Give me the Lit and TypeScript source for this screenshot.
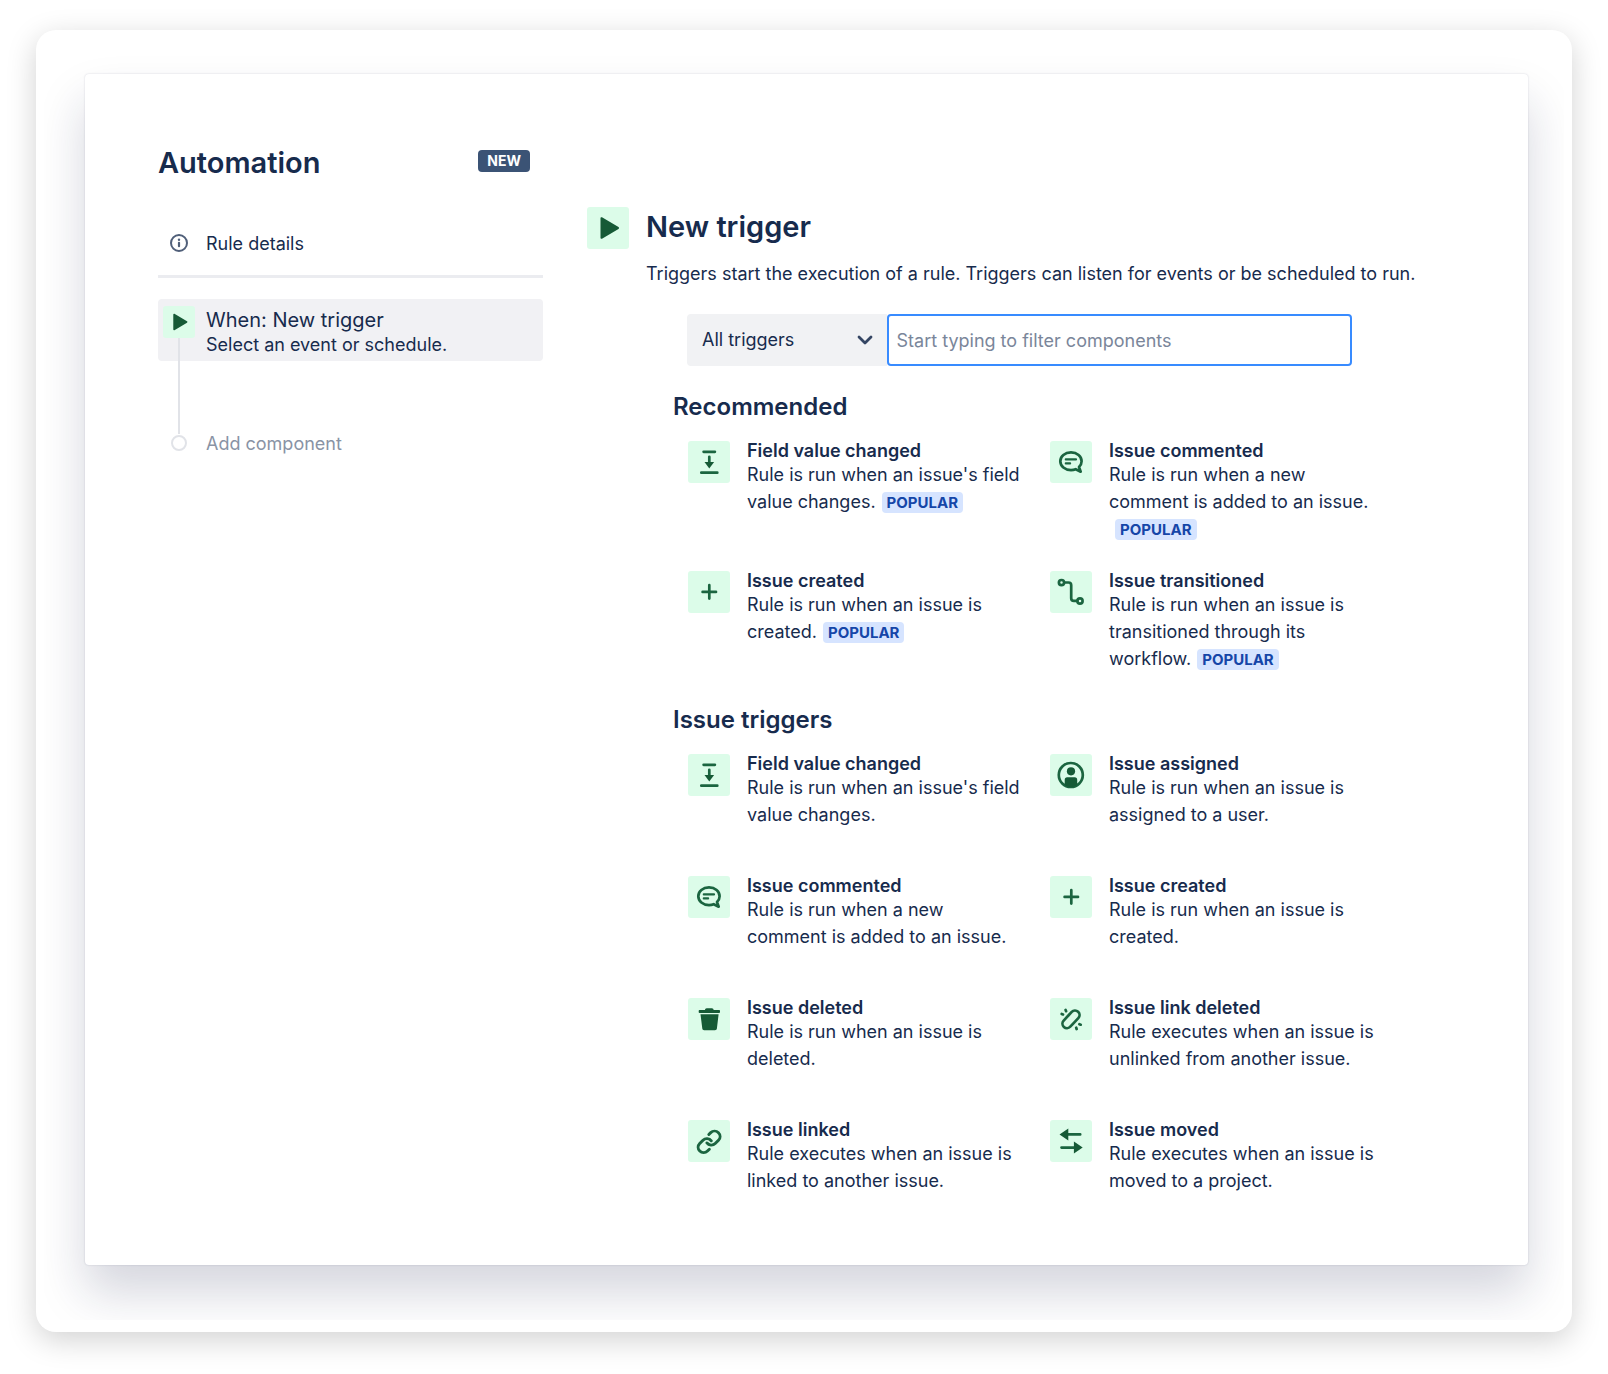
import { LitElement, html, css, svg, nothing, type SVGTemplateResult } from "lit";

interface Trigger {
  icon: string;
  title: string;
  text: string;
  popular?: boolean;
}

interface Section {
  title: string;
  triggers: Trigger[];
}

const ICONS: Record<string, SVGTemplateResult> = {
  play: svg`<path class="solid" d="M13.500 11.200c0-.8.8-1.300 1.500-.9l16.500 9.800c.7.400.7 1.400 0 1.800l-16.500 9.800c-.7.400-1.500 0-1.500-.9z"/>`,
  field: svg`<path class="line" d="M15.600 10.800h11.300M13.300 31.700h16M21.300 15.800v7"/><path class="solid" d="M16.500 20.900h9.600l-4.800 6.600z"/>`,
  comment: svg`<path class="line" d="M21 11.400c-6.100 0-10.700 3.800-10.700 8.800s4.600 8.900 10.700 8.900c1.700 0 3.300-.3 4.700-.9l5 2.500-1.700-4.700c1.600-1.500 2.600-3.600 2.600-5.800 0-5-4.500-8.800-10.600-8.800z"/><path class="line thin" d="M15.800 18.400h10.200M15.800 22.400h4.300"/>`,
  plus: svg`<path class="line" d="M21.300 14.200v13.400M14.600 20.900h13.400"/>`,
  transition: svg`<path class="line" d="M14.300 11.500h4.200a2.700 2.700 0 0 1 2.700 2.700v13a2.700 2.700 0 0 0 2.700 2.700h3.200"/><circle class="line" cx="11.500" cy="11.600" r="2.600"/><circle class="line" cx="30" cy="30" r="2.600"/>`,
  person: svg`<circle class="line" cx="20.800" cy="21" r="12"/><circle class="solid" cx="21" cy="17.300" r="4.100"/><path class="solid" d="M14.700 31v-5.200a2.500 2.500 0 0 1 2.500-2.500h7.500a2.500 2.500 0 0 1 2.500 2.500v5.200c-3.600 2.800-8.900 2.800-12.500 0z"/>`,
  trash: svg`<path class="solid" d="M17 12c0-1 .7-1.700 1.700-1.700h5.200c1 0 1.700.7 1.700 1.700h5.400c.6 0 1 .4 1 1v1.200c0 .5-.4.800-.9.800H11.600c-.5 0-.9-.3-.9-.8V13c0-.6.4-1 1-1zM12.500 16.200h18.100l-1.700 14.400c-.1 1-.9 1.700-1.900 1.700H16.200c-1 0-1.800-.7-1.900-1.700z"/>`,
  unlink: svg`<g transform="translate(21 21.300) rotate(-47)"><path class="line" d="M-1 4.500H-5.900a4.500 4.500 0 0 1 0-9H3M1-4.500H5.900a4.500 4.500 0 0 1 0 9H-3"/></g><path class="line" d="M15.600 12l.5 1.200M11.700 15.900l1.300.500M26.200 29.700l.4 1.300M29.400 26.200l1.300.500"/>`,
  link: svg`<g transform="translate(7.900 8.900) scale(1.100 1.080)"><path class="line" d="M10 13a5 5 0 0 0 7.540.540l3-3a5 5 0 0 0-7.070-7.070l-1.720 1.710"/><path class="line" d="M14 11a5 5 0 0 0-7.540-.540l-3 3a5 5 0 0 0 7.070 7.070l1.710-1.710"/></g>`,
  move: svg`<path class="line" d="M17 14.400h13.200M11.500 27.600h13"/><path class="solid" d="M9.500 14.400l8.800-6v12zM32.700 27.600l-8.800-6v12z"/>`,
};

const SECTIONS: Section[] = [
  {
    title: "Recommended",
    triggers: [
      { icon: "field", title: "Field value changed", text: "Rule is run when an issue's field value changes.", popular: true },
      { icon: "comment", title: "Issue commented", text: "Rule is run when a new comment is added to an issue.", popular: true },
      { icon: "plus", title: "Issue created", text: "Rule is run when an issue is created.", popular: true },
      { icon: "transition", title: "Issue transitioned", text: "Rule is run when an issue is transitioned through its workflow.", popular: true },
    ],
  },
  {
    title: "Issue triggers",
    triggers: [
      { icon: "field", title: "Field value changed", text: "Rule is run when an issue's field value changes." },
      { icon: "person", title: "Issue assigned", text: "Rule is run when an issue is assigned to a user." },
      { icon: "comment", title: "Issue commented", text: "Rule is run when a new comment is added to an issue." },
      { icon: "plus", title: "Issue created", text: "Rule is run when an issue is created." },
      { icon: "trash", title: "Issue deleted", text: "Rule is run when an issue is deleted." },
      { icon: "unlink", title: "Issue link deleted", text: "Rule executes when an issue is unlinked from another issue." },
      { icon: "link", title: "Issue linked", text: "Rule executes when an issue is linked to another issue." },
      { icon: "move", title: "Issue moved", text: "Rule executes when an issue is moved to a project." },
    ],
  },
];

/** Square green tile that holds one trigger glyph. */
class TriggerIcon extends LitElement {
  static properties = { name: { type: String } };
  declare name: string;

  static styles = css`
    :host {
      display: block;
      flex: none;
      width: 42px;
      height: 42px;
      border-radius: 3px;
      background: #dcfce9;
    }
    svg {
      display: block;
      width: 100%;
      height: 100%;
    }
    .line {
      fill: none;
      stroke: #1b6540;
      stroke-width: 2.7;
      stroke-linecap: round;
      stroke-linejoin: round;
    }
    .thin {
      stroke-width: 2.2;
    }
    .solid {
      fill: #165a36;
      stroke: none;
    }
  `;

  render() {
    return html`<svg viewBox="0 0 42 42" aria-hidden="true">${ICONS[this.name]}</svg>`;
  }
}
customElements.define("trigger-icon", TriggerIcon);

class AppRoot extends LitElement {
  static styles = css`
    :host {
      display: block;
      font-family: Inter, "Liberation Sans", sans-serif;
      font-size: 18px;
      line-height: 24px;
      color: #172b4d;
      background: #fff;
      padding: 30px 36px 42px;
    }
    *,
    *::before,
    *::after {
      box-sizing: border-box;
    }
    h1,
    h2,
    h3,
    p,
    ul {
      margin: 0;
      padding: 0;
      font-weight: 400;
    }
    ul {
      list-style: none;
    }
    button {
      border: 0;
      padding: 0;
      margin: 0;
      background: none;
      font: inherit;
      color: inherit;
      text-align: left;
      cursor: pointer;
    }

    .frame {
      padding: 12px 8px;
      border-radius: 20px;
      background: #fff;
      box-shadow: 0 8px 30px rgba(0, 0, 0, 0.18);
    }
    .stage {
      overflow: hidden;
      padding: 32px 36px 55px 41px;
    }
    .panel {
      display: grid;
      grid-template-columns: 385px minmax(0, 1fr);
      column-gap: 44px;
      padding: 71px 72px 52px 73px;
      border-radius: 4px;
      background: #fff;
      box-shadow: 0 0 2px rgba(20, 30, 70, 0.18), 0 28px 48px rgba(20, 28, 70, 0.18);
    }

    .side-head {
      display: flex;
      align-items: flex-start;
      justify-content: space-between;
      padding-right: 13px;
      margin-bottom: 51px;
    }
    .side-head h1,
    .title {
      font-size: 29px;
      line-height: 36px;
      font-weight: 600;
    }
    .new {
      margin-top: 5px;
      padding: 0 9px;
      border-radius: 4px;
      background: #3b5375;
      color: #fff;
      font-size: 14px;
      line-height: 22px;
      font-weight: 700;
    }
    .step {
      display: flex;
      gap: 11px;
      width: 100%;
      padding-left: 5px;
    }
    .marker {
      display: flex;
      flex: none;
      justify-content: center;
      align-items: center;
      width: 32px;
      height: 22px;
    }
    .details {
      padding-bottom: 19px;
      border-bottom: 3px solid #ebecf0;
      margin-bottom: 21px;
    }
    .when {
      padding: 7px 5px 4px;
      border-radius: 4px;
      background: #f1f1f4;
      margin-bottom: 71px;
    }
    .rail {
      position: relative;
      flex: none;
      width: 32px;
    }
    .rail trigger-icon {
      width: 32px;
      height: 32px;
    }
    .rail::after {
      content: "";
      position: absolute;
      left: 15px;
      top: 32px;
      width: 2px;
      height: 96px;
      background: #e1e3e8;
    }
    .when-text {
      display: flex;
      flex-direction: column;
      padding-top: 2px;
    }
    .when-title {
      font-size: 20px;
      line-height: 25px;
    }
    .add {
      color: #8993a5;
    }
    .dot {
      width: 16px;
      height: 16px;
      border: 2px solid #e1e3e8;
      border-radius: 50%;
      background: #fff;
    }

    .main {
      display: flex;
      align-items: flex-start;
      gap: 17px;
      padding-top: 62px;
    }
    .body {
      flex: 1;
      min-width: 0;
    }
    .title {
      line-height: 40px;
      margin-bottom: 15px;
    }
    .filter {
      display: flex;
      height: 52px;
      margin: 28px 104px 25px 41px;
    }
    .picker {
      position: relative;
      flex: 0 0 30%;
    }
    .picker select {
      appearance: none;
      width: 100%;
      height: 100%;
      padding: 0 40px 0 15px;
      border: 0;
      border-radius: 4px 0 0 4px;
      background: #f1f2f4;
      font: inherit;
      color: inherit;
    }
    .picker svg {
      position: absolute;
      right: 12px;
      top: 16px;
      width: 20px;
      height: 20px;
      pointer-events: none;
    }
    .filter input {
      flex: 1;
      min-width: 0;
      padding: 2px 8px 0;
      border: 2px solid #388bff;
      border-radius: 4px;
      outline: none;
      background: #fff;
      font: inherit;
      color: inherit;
    }
    .filter input::placeholder {
      color: #7a869a;
      opacity: 1;
    }

    .sections {
      display: flex;
      flex-direction: column;
      gap: 32px;
      padding: 0 71px 0 27px;
    }
    .sections h3 {
      font-size: 24px;
      line-height: 32px;
      font-weight: 600;
      margin-bottom: 18px;
    }
    .grid {
      display: grid;
      grid-template-columns: 1fr 1fr;
      gap: 29px 27px;
      padding-left: 15px;
    }
    .grid li {
      min-height: 93px;
    }
    .card {
      display: flex;
      align-items: flex-start;
      gap: 17px;
      width: 100%;
    }
    .name {
      display: block;
      font-weight: 600;
      line-height: 20px;
    }
    .text {
      display: block;
      line-height: 27px;
    }
    .popular {
      display: inline-block;
      margin-left: 6px;
      padding: 0 5px;
      border-radius: 4px;
      background: #d6e4ff;
      color: #1546a8;
      font-size: 15px;
      line-height: 21px;
      font-weight: 700;
    }
  `;

  private renderTrigger(t: Trigger) {
    return html`<li>
      <button class="card" type="button">
        <trigger-icon name=${t.icon}></trigger-icon>
        <span>
          <span class="name">${t.title}</span>
          <span class="text">${t.text}${t.popular ? html`<span class="popular">POPULAR</span>` : nothing}</span>
        </span>
      </button>
    </li>`;
  }

  render() {
    return html`
      <div class="frame">
        <div class="stage">
          <div class="panel">
            <aside>
              <header class="side-head">
                <h1>Automation</h1>
                <span class="new">NEW</span>
              </header>
              <button class="step details" type="button">
                <span class="marker">
                  <svg width="18" height="18" viewBox="0 0 18 18" aria-hidden="true">
                    <circle cx="9" cy="9" r="8" fill="none" stroke="#505f79" stroke-width="2" />
                    <circle cx="9" cy="5.800" r="1.200" fill="#505f79" />
                    <path d="M9 8.800v3.400" stroke="#505f79" stroke-width="2.200" stroke-linecap="round" />
                  </svg>
                </span>
                <span>Rule details</span>
              </button>
              <button class="step when" type="button">
                <span class="rail"><trigger-icon name="play"></trigger-icon></span>
                <span class="when-text">
                  <span class="when-title">When: New trigger</span>
                  <span>Select an event or schedule.</span>
                </span>
              </button>
              <button class="step add" type="button">
                <span class="marker"><span class="dot"></span></span>
                <span>Add component</span>
              </button>
            </aside>
            <main class="main">
              <trigger-icon name="play"></trigger-icon>
              <div class="body">
                <h2 class="title">New trigger</h2>
                <p>Triggers start the execution of a rule. Triggers can listen for events or be scheduled to run.</p>
                <div class="filter">
                  <div class="picker">
                    <select aria-label="Trigger category">
                      <option>All triggers</option>
                    </select>
                    <svg viewBox="0 0 20 20" aria-hidden="true">
                      <path d="M4 7l6 6 6-6" fill="none" stroke="#344563" stroke-width="2.800" stroke-linecap="round" stroke-linejoin="round" />
                    </svg>
                  </div>
                  <input type="text" aria-label="Filter components" placeholder="Start typing to filter components" />
                </div>
                <div class="sections">
                  ${SECTIONS.map(
                    (s) => html`<section>
                      <h3>${s.title}</h3>
                      <ul class="grid">
                        ${s.triggers.map((t) => this.renderTrigger(t))}
                      </ul>
                    </section>`,
                  )}
                </div>
              </div>
            </main>
          </div>
        </div>
      </div>
    `;
  }
}
customElements.define("app-root", AppRoot);
